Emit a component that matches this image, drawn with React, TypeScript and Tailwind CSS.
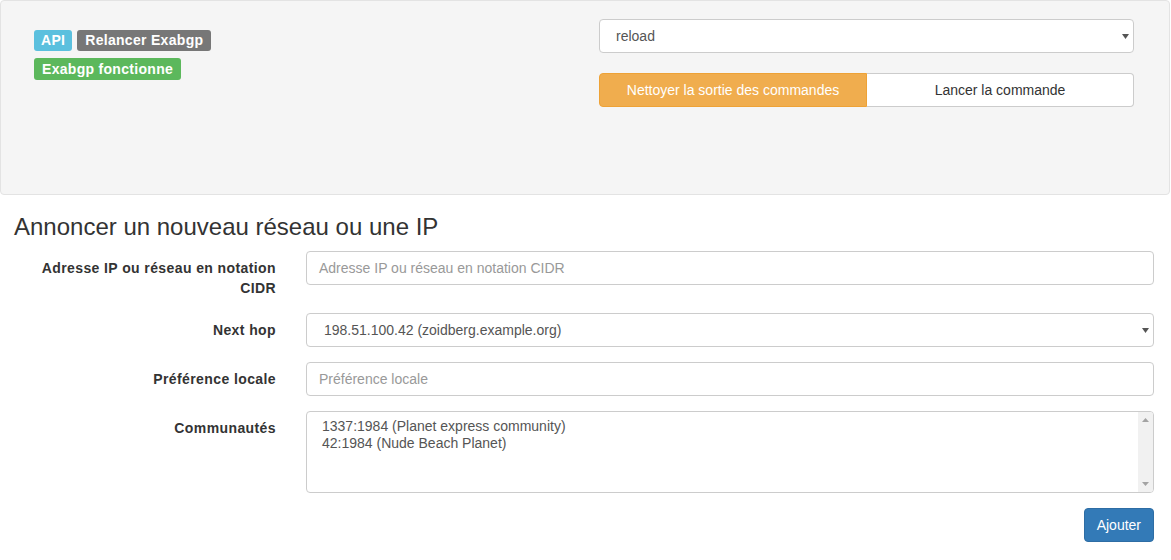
import React from "react";

function Caret() {
  return (
    <svg width="7" height="5" viewBox="0 0 7 5" className="shrink-0">
      <path d="M0 0 L7 0 L3.5 5 Z" fill="#555" />
    </svg>
  );
}

function FormRow({ label, children }: { label: React.ReactNode; children: React.ReactNode }) {
  return (
    <div className="flex gap-[30px] mb-[15px]">
      <div className="w-[262px] shrink-0 text-right font-bold tracking-[0.4px] pt-[7px] leading-[20px] text-[#333]">{label}</div>
      <div className="flex-1">{children}</div>
    </div>
  );
}

export default function App() {
  return (
    <div className="w-[1171px] h-[560px] bg-white text-[14px] text-[#333]" style={{ fontFamily: '"Liberation Sans", Arial, sans-serif' }}>
      {/* top panel */}
      <div className="w-[1170px] h-[195px] bg-[#f5f5f5] border border-[#e3e3e3] rounded-[4px] pt-[18px] pl-[33px] pr-[35px]">
        <div className="grid grid-cols-2 gap-[30px]">
          <div className="pt-[11px] flex flex-col gap-[7px]">
            <div className="flex gap-[5px]">
              <span className="h-[21px] px-[7px] rounded-[3px] bg-[#5bc0de] text-white font-bold tracking-[0.3px] text-[14px] leading-[21px]">API</span>
              <span className="h-[21px] px-[8px] rounded-[3px] bg-[#777] text-white font-bold tracking-[0.3px] text-[14px] leading-[21px]">Relancer Exabgp</span>
            </div>
            <div className="flex">
              <span className="h-[22px] px-[8px] rounded-[3px] bg-[#5cb85c] text-white font-bold tracking-[0.3px] text-[14px] leading-[22px]">Exabgp fonctionne</span>
            </div>
          </div>
          <div className="flex flex-col gap-[20px]">
            <div className="h-[34px] bg-white border border-[#ccc] rounded-[4px] flex items-center pl-[16px] pr-[4px] text-[#555]">
              <span className="flex-1">reload</span>
              <Caret />
            </div>
            <div className="flex h-[34px]">
              <div className="w-[268px] bg-[#f0ad4e] border border-[#eea236] rounded-l-[4px] text-white flex items-center justify-center">
                Nettoyer la sortie des commandes
              </div>
              <div className="flex-1 bg-white border border-l-0 border-[#ccc] rounded-r-[4px] flex items-center justify-center">
                Lancer la commande
              </div>
            </div>
          </div>
        </div>
      </div>

      {/* form */}
      <div className="pl-[14px] pr-[17px]">
        <h3 className="text-[24px] leading-[26px] mt-[19px] mb-[11px] font-normal text-[#333]">Annoncer un nouveau réseau ou une IP</h3>

        <FormRow label="Adresse IP ou réseau en notation CIDR">
          <div className="h-[34px] border border-[#ccc] rounded-[4px] flex items-center pl-[12px] text-[#999]">
            Adresse IP ou réseau en notation CIDR
          </div>
        </FormRow>

        <FormRow label="Next hop">
          <div className="h-[34px] border border-[#ccc] rounded-[4px] flex items-center pl-[17px] pr-[4px] text-[#555]">
            <span className="flex-1">198.51.100.42 (zoidberg.example.org)</span>
            <Caret />
          </div>
        </FormRow>

        <FormRow label="Préférence locale">
          <div className="h-[34px] border border-[#ccc] rounded-[4px] flex items-center pl-[12px] text-[#999]">
            Préférence locale
          </div>
        </FormRow>

        <FormRow label="Communautés">
          <div className="h-[82px] border border-[#ccc] rounded-[4px] flex overflow-hidden">
            <div className="flex-1 pl-[15px] pt-[6px] text-[#555] leading-[17px]">
              <div>1337:1984 (Planet express community)</div>
              <div>42:1984 (Nude Beach Planet)</div>
            </div>
            <div className="w-[15px] bg-[#f1f1f1] flex flex-col justify-between items-center py-[6px]">
              <svg width="7" height="4" viewBox="0 0 7 4"><path d="M0 4 L7 4 L3.5 0 Z" fill="#a3a3a3" /></svg>
              <svg width="7" height="4" viewBox="0 0 7 4"><path d="M0 0 L7 0 L3.5 4 Z" fill="#a3a3a3" /></svg>
            </div>
          </div>
        </FormRow>

        <div className="flex justify-end">
          <div className="h-[34px] px-[12px] bg-[#337ab7] border border-[#2e6da4] rounded-[4px] text-white flex items-center">Ajouter</div>
        </div>
      </div>
    </div>
  );
}
